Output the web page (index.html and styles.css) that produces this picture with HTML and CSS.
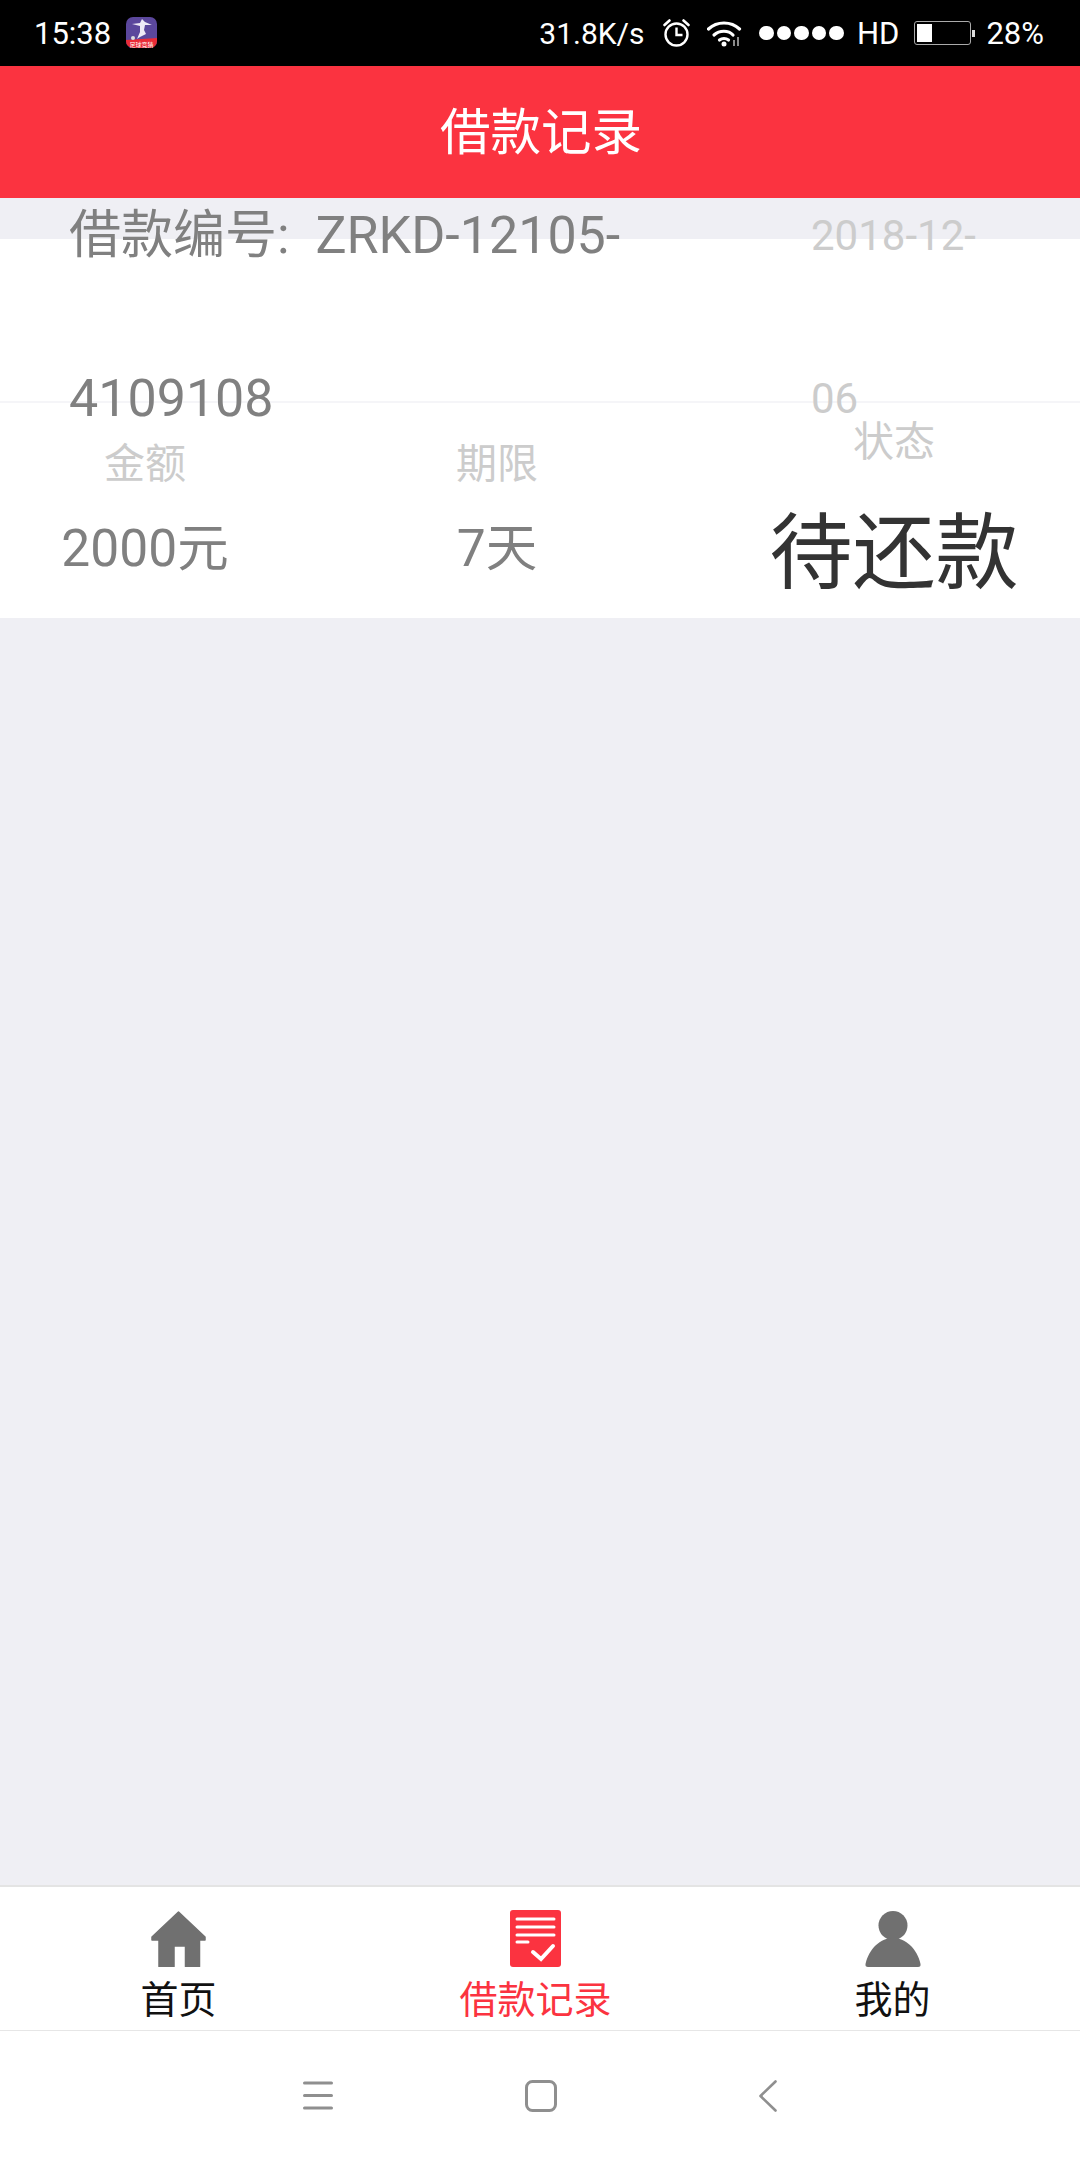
FILE: index.html
```html
<!DOCTYPE html>
<html lang="zh-CN">
<head>
  <meta charset="UTF-8">
  <meta name="viewport" content="width=device-width, initial-scale=1.0">
  <title>借款记录</title>
  <link rel="stylesheet" href="styles.css">
</head>
<body>

  <div class="status-bar">
    <span class="status-time">15:38</span>
    <svg class="status-logo" width="31" height="31" viewBox="0 0 31 31">
      <rect width="31" height="31" rx="7" fill="#5b479c"/>
      <path d="M0 23 L31 21 V24 a7 7 0 0 1 -7 7 H7 a7 7 0 0 1 -7 -7 Z" fill="#ea2b36"/>
      <path d="M6 7 L14 6 L16 2 L19 5 L26 8 L19 8 L18 13 L20 17 L14 20 L11 22 L14 15 L14 9 Z" fill="#eeeaf6"/>
      <circle cx="7" cy="21" r="2" fill="#ddd"/>
      <text class="logo-text" x="15.5" y="29.5" text-anchor="middle">足球竞猜</text>
    </svg>
    <div class="status-right">
      <span class="status-speed">31.8K/s</span>
      <svg class="status-alarm" width="27" height="28" viewBox="0 0 26 28" fill="none" stroke="#fff">
        <circle cx="13" cy="15.5" r="11" stroke-width="2.4"/>
        <path d="M13 8.5 V16 H19" stroke-width="2.4"/>
        <path d="M1 6 L6 1.5 M25 6 L20 1.5" stroke-width="2.6" stroke-linecap="round"/>
      </svg>
      <svg class="status-wifi" width="36" height="27" viewBox="0 0 36 27" fill="none" stroke="#fff" stroke-width="3.200" stroke-linecap="round">
        <path d="M1.5 9 C10 1 24 1 32.5 9"/>
        <path d="M7 15 C12.500 10 21.500 10 26 15"/>
        <path d="M12.500 20 C15 18 19 18 21.500 20"/>
        <circle cx="17" cy="24" r="2.500" fill="#fff" stroke="none"/>
        <path d="M27 20 V26 M31 17 V26" stroke="#999" stroke-width="1.800" stroke-linecap="butt"/>
      </svg>
      <div class="signal-dots">
        <i></i><i></i><i></i><i></i><i></i>
      </div>
      <span class="status-hd">HD</span>
      <div class="battery">
        <div class="battery-level"></div>
      </div>
      <div class="battery-nub"></div>
      <span class="status-percent">28%</span>
    </div>
  </div>

  <div class="header">借款记录</div>

  <div class="main">
    <div class="loan-card">
      <div class="loan-top">
        <div class="loan-no">借款编号:&nbsp;&nbsp;ZRKD-12105-4109108</div>
        <div class="loan-date">2018-12-06</div>
      </div>
      <div class="loan-info">
        <div class="loan-col">
          <div class="loan-label">金额</div>
          <div class="loan-value">2000元</div>
        </div>
        <div class="loan-col">
          <div class="loan-label">期限</div>
          <div class="loan-value">7天</div>
        </div>
        <div class="loan-col loan-col-status">
          <div class="loan-label">状态</div>
          <div class="loan-status">待还款</div>
        </div>
      </div>
    </div>
  </div>

  <div class="tabbar">
    <div class="tab">
      <svg width="57" height="57" viewBox="0 0 57 57" fill="#707070">
        <path d="M28.500 2 L55 27 V30 H49.500 V56.500 H35.500 V36 H24 V56.500 H9 V30 H2 V27 Z" stroke="#707070" stroke-width="1.500" stroke-linejoin="round"/>
      </svg>
      <span>首页</span>
    </div>
    <div class="tab tab-active">
      <svg width="51" height="57" viewBox="0 0 51 57">
        <rect width="51" height="57" rx="3" fill="#fb3340"/>
        <path d="M7 9 H44 M7 17 H44 M7 25 H44 M7 32 H18" stroke="#fff" stroke-width="3" stroke-linecap="round" fill="none"/>
        <path d="M23 42 L31 49 L43 36" stroke="#fff" stroke-width="4" stroke-linecap="round" fill="none"/>
      </svg>
      <span>借款记录</span>
    </div>
    <div class="tab">
      <svg width="56" height="57" viewBox="0 0 56 57" fill="#707070">
        <circle cx="28" cy="15.500" r="14.500"/>
        <path d="M3 57 Q0 57 .5 54 C4 38 16 28 28 28 C40 28 52 38 55.500 54 Q56 57 53 57 Z"/>
      </svg>
      <span>我的</span>
    </div>
  </div>

  <div class="nav-bar">
    <svg class="nav-menu" width="30" height="31" viewBox="0 0 30 31" stroke="#8f8f8f" stroke-width="3" stroke-linecap="round">
      <path d="M1.500 3 H28.500 M1.500 15.500 H28.500 M1.500 28 H28.500"/>
    </svg>
    <svg class="nav-home" width="32" height="32" viewBox="0 0 32 32" fill="none" stroke="#8f8f8f" stroke-width="3">
      <rect x="1.500" y="1.500" width="29" height="29" rx="6"/>
    </svg>
    <svg class="nav-back" width="18" height="32" viewBox="0 0 18 32" fill="none" stroke="#8f8f8f" stroke-width="2.600" stroke-linecap="round" stroke-linejoin="round">
      <path d="M16.500 1.500 L1.500 16 L16.500 30.500"/>
    </svg>
  </div>

</body>
</html>
```

FILE: styles.css
```css
* {
  box-sizing: border-box;
}
body {
  margin: 0;
  padding: 0;
  height: 2160px;
  display: flex;
  flex-direction: column;
  font-family: Roboto, "Noto Sans CJK SC", sans-serif;
  background: #efeff4;
}

/* status bar */
.status-bar {
  height: 66px;
  flex: none;
  display: flex;
  align-items: center;
  padding: 0 36px 0 34px;
  background: #000;
  color: #fff;
  font-size: 30px;
}
.status-time {
  font-size: 31px;
}
.status-logo {
  margin-left: 15px;
  margin-top: -1px;
}
.logo-text {
  font-size: 6px;
  fill: #fff;
}
.status-right {
  margin-left: auto;
  display: flex;
  align-items: center;
}
.status-alarm {
  margin-left: 19px;
}
.status-wifi {
  margin-left: 17px;
}
.signal-dots {
  margin-left: 16px;
  display: flex;
  gap: 3px;
}
.signal-dots i {
  display: block;
  width: 14.500px;
  height: 14.500px;
  border-radius: 50%;
  background: #fff;
}
.status-hd {
  margin-left: 13px;
  font-size: 31px;
}
.battery {
  margin-left: 15px;
  width: 57px;
  height: 24px;
  padding: 2px;
  border: 1px solid #aaa;
  border-radius: 3px;
}
.battery-level {
  width: 15px;
  height: 100%;
  background: #fff;
}
.battery-nub {
  width: 3px;
  height: 7px;
  margin-left: 1px;
  background: #ddd;
}
.status-percent {
  margin-left: 11px;
  font-size: 31px;
}

/* title */
.header {
  height: 132px;
  flex: none;
  display: flex;
  align-items: center;
  justify-content: center;
  padding: 0 0 8px 2px;
  background: #fb3340;
  color: #fff;
  font-size: 50.500px;
}

/* loan card */
.main {
  flex: 1;
  padding-top: 41px;
}
.loan-card {
  height: 379px;
  background: #fff;
}
.loan-top {
  height: 164px;
  display: flex;
  align-items: center;
  justify-content: space-between;
  padding: 0 99px 7px 69px;
  border-bottom: 2px solid #f5f5f8;
  line-height: 163px;
}
.loan-no {
  width: 600px;
  font-size: 52px;
  color: #808080;
}
.loan-date {
  width: 170px;
  font-size: 42px;
  color: #ccc;
}
.loan-info {
  display: grid;
  grid-template-columns: 290px 414px 1fr;
  text-align: center;
}
.loan-col {
  padding-top: 31px;
}
.loan-col-status {
  padding-top: 9px;
  padding-left: 4px;
}
.loan-label {
  font-size: 41px;
  line-height: 60px;
  color: #ccc;
}
.loan-value {
  font-size: 51.500px;
  line-height: 110px;
  color: #808080;
}
.loan-status {
  margin-top: 22px;
  font-size: 83px;
  line-height: 120px;
  color: #333;
}

/* bottom tabs */
.tabbar {
  height: 145px;
  flex: none;
  display: grid;
  grid-template-columns: 357px 357px 357px;
  padding-top: 23px;
  background: #fff;
  border-top: 2px solid #e4e4e4;
}
.tab {
  display: flex;
  flex-direction: column;
  align-items: center;
  gap: 10px;
  font-size: 38px;
  line-height: 46px;
  color: #111;
}
.tab-active {
  color: #fb3340;
}

/* android buttons */
.nav-bar {
  height: 130px;
  flex: none;
  display: flex;
  align-items: center;
  padding-left: 303px;
  background: #fff;
  border-top: 1px solid #e6e6e6;
}
.nav-home {
  margin-left: 192px;
}
.nav-back {
  margin-left: 202px;
}
```
